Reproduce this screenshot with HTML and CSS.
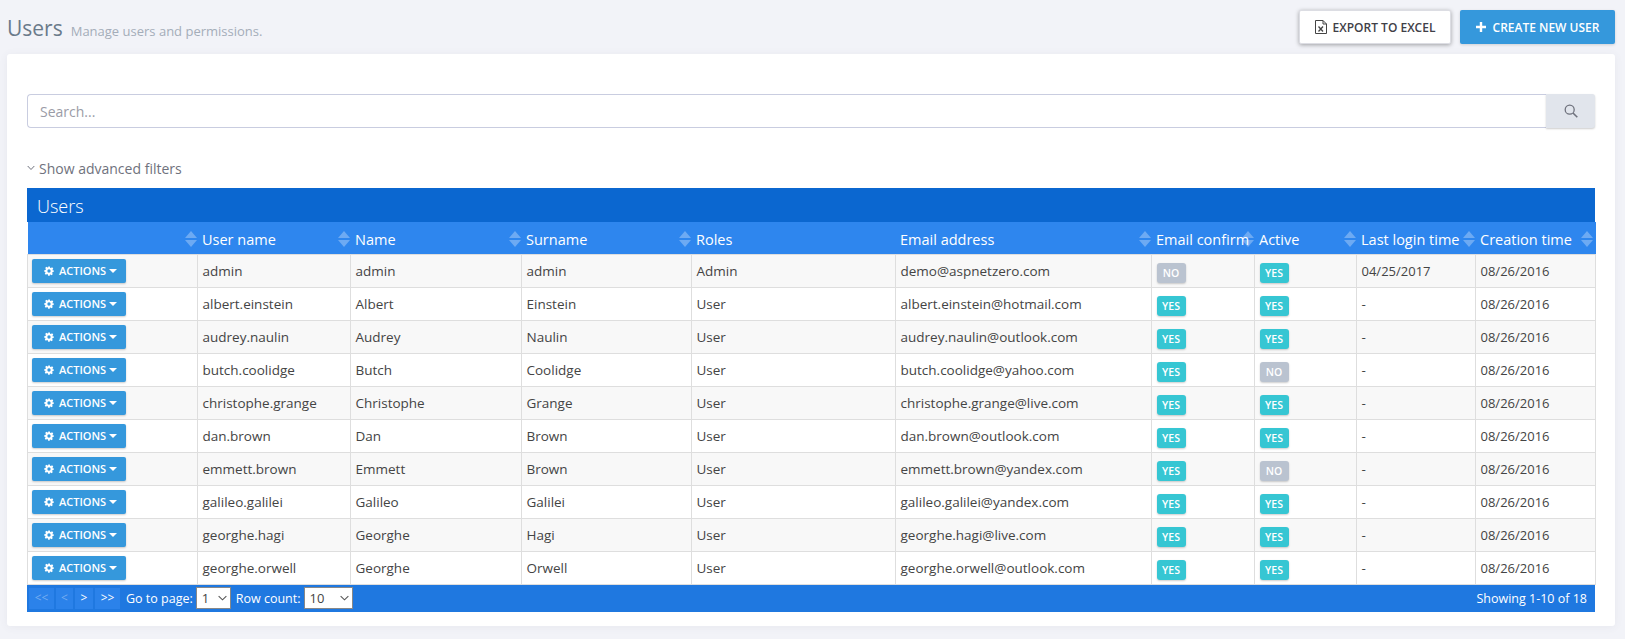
FILE: index.html
```html
<!DOCTYPE html>
<html lang="en">
<head>
<meta charset="utf-8">
<title>Users</title>
<link rel="stylesheet" href="styles.css">
</head>
<body>
<svg class="defs" width="0" height="0" aria-hidden="true">
  <defs>
    <symbol id="sort" viewBox="0 0 12 16"><path class="up" d="M6 0 12 7H0Z"/><path class="down" d="M0 9H12L6 16Z"/></symbol>
    <symbol id="cog" viewBox="0 0 24 24"><path fill-rule="evenodd" d="M10 1h4l.7 3.2 1.9.8 2.8-1.8 2.8 2.8-1.8 2.8.8 1.9L23.4 10v4l-3.2.7-.8 1.9 1.8 2.8-2.8 2.8-2.8-1.8-1.9.8L14 23.4h-4l-.7-3.2-1.9-.8-2.8 1.8-2.8-2.8 1.8-2.8-.8-1.9L.6 14v-4l3.2-.7.8-1.9L2.8 4.6l2.8-2.8 2.8 1.8 1.9-.8ZM12 8a4 4 0 1 0 0 8 4 4 0 0 0 0-8Z"/></symbol>
    <symbol id="chev" viewBox="0 0 10 6"><path d="M.7.8 5 5 9.300.8" fill="none" stroke="#555" stroke-width="1.200"/></symbol>
  </defs>
</svg>
<header class="page-head">
  <div class="page-title"><h1>Users</h1><span class="subtitle">Manage users and permissions.</span></div>
  <div class="head-actions">
    <button class="btn btn-white" type="button">
      <svg class="ico-excel" viewBox="0 0 12 14"><path d="M.5.5h7.5l3.5 3.5v9.500H.5Z M8 .5V4h3.500" fill="none" stroke="#444" stroke-width="1"/><path d="M3.500 6.500l4.500 5M8 6.500l-4.500 5" fill="none" stroke="#444" stroke-width="1.300"/></svg>
      EXPORT TO EXCEL</button>
    <button class="btn btn-blue" type="button">
      <svg class="ico-plus" viewBox="0 0 10 10"><path d="M3.800 0h2.400v3.800H10v2.400H6.200V10H3.800V6.200H0V3.800h3.800Z" fill="#fff"/></svg>
      CREATE NEW USER</button>
  </div>
</header>
<main class="panel">
  <div class="search">
    <input class="search-input" type="text" placeholder="Search...">
    <button class="search-btn" type="button" aria-label="Search">
      <svg viewBox="0 0 14 14" width="14" height="14"><circle cx="5.700" cy="5.700" r="4.500" fill="none" stroke="#6f727d" stroke-width="1.300"/><path d="M9 9l4.300 4.300" stroke="#6f727d" stroke-width="1.600"/></svg>
    </button>
  </div>
  <div class="adv">
    <svg viewBox="0 0 8 6" width="8" height="6"><path d="M.7 1 4 4.500 7.300 1" fill="none" stroke="#6f727d" stroke-width="1"/></svg>
    Show advanced filters
  </div>
  <section class="grid">
    <div class="grid-title">Users</div>
    <table>
      <colgroup>
        <col class="c0"><col class="c1"><col class="c2"><col class="c3"><col class="c4"><col class="c5"><col class="c6"><col class="c7"><col class="c8"><col class="c9">
      </colgroup>
      <thead>
        <tr>
          <th><svg class="sort"><use href="#sort"/></svg></th>
          <th>User name<svg class="sort sort-active"><use href="#sort"/></svg></th>
          <th>Name<svg class="sort"><use href="#sort"/></svg></th>
          <th>Surname<svg class="sort"><use href="#sort"/></svg></th>
          <th>Roles</th>
          <th>Email address<svg class="sort"><use href="#sort"/></svg></th>
          <th>Email confirm<svg class="sort"><use href="#sort"/></svg></th>
          <th>Active<svg class="sort"><use href="#sort"/></svg></th>
          <th>Last login time<svg class="sort"><use href="#sort"/></svg></th>
          <th>Creation time<svg class="sort"><use href="#sort"/></svg></th>
        </tr>
      </thead>
      <tbody>
        <tr><td><button class="act" type="button"><svg class="cog"><use href="#cog"/></svg>ACTIONS<i class="caret"></i></button></td><td>admin</td><td>admin</td><td>admin</td><td>Admin</td><td>demo@aspnetzero.com</td><td><span class="tag no">NO</span></td><td><span class="tag yes">YES</span></td><td class="date">04/25/2017</td><td class="date">08/26/2016</td></tr>
        <tr><td><button class="act" type="button"><svg class="cog"><use href="#cog"/></svg>ACTIONS<i class="caret"></i></button></td><td>albert.einstein</td><td>Albert</td><td>Einstein</td><td>User</td><td>albert.einstein@hotmail.com</td><td><span class="tag yes">YES</span></td><td><span class="tag yes">YES</span></td><td>-</td><td class="date">08/26/2016</td></tr>
        <tr><td><button class="act" type="button"><svg class="cog"><use href="#cog"/></svg>ACTIONS<i class="caret"></i></button></td><td>audrey.naulin</td><td>Audrey</td><td>Naulin</td><td>User</td><td>audrey.naulin@outlook.com</td><td><span class="tag yes">YES</span></td><td><span class="tag yes">YES</span></td><td>-</td><td class="date">08/26/2016</td></tr>
        <tr><td><button class="act" type="button"><svg class="cog"><use href="#cog"/></svg>ACTIONS<i class="caret"></i></button></td><td>butch.coolidge</td><td>Butch</td><td>Coolidge</td><td>User</td><td>butch.coolidge@yahoo.com</td><td><span class="tag yes">YES</span></td><td><span class="tag no">NO</span></td><td>-</td><td class="date">08/26/2016</td></tr>
        <tr><td><button class="act" type="button"><svg class="cog"><use href="#cog"/></svg>ACTIONS<i class="caret"></i></button></td><td>christophe.grange</td><td>Christophe</td><td>Grange</td><td>User</td><td>christophe.grange@live.com</td><td><span class="tag yes">YES</span></td><td><span class="tag yes">YES</span></td><td>-</td><td class="date">08/26/2016</td></tr>
        <tr><td><button class="act" type="button"><svg class="cog"><use href="#cog"/></svg>ACTIONS<i class="caret"></i></button></td><td>dan.brown</td><td>Dan</td><td>Brown</td><td>User</td><td>dan.brown@outlook.com</td><td><span class="tag yes">YES</span></td><td><span class="tag yes">YES</span></td><td>-</td><td class="date">08/26/2016</td></tr>
        <tr><td><button class="act" type="button"><svg class="cog"><use href="#cog"/></svg>ACTIONS<i class="caret"></i></button></td><td>emmett.brown</td><td>Emmett</td><td>Brown</td><td>User</td><td>emmett.brown@yandex.com</td><td><span class="tag yes">YES</span></td><td><span class="tag no">NO</span></td><td>-</td><td class="date">08/26/2016</td></tr>
        <tr><td><button class="act" type="button"><svg class="cog"><use href="#cog"/></svg>ACTIONS<i class="caret"></i></button></td><td>galileo.galilei</td><td>Galileo</td><td>Galilei</td><td>User</td><td>galileo.galilei@yandex.com</td><td><span class="tag yes">YES</span></td><td><span class="tag yes">YES</span></td><td>-</td><td class="date">08/26/2016</td></tr>
        <tr><td><button class="act" type="button"><svg class="cog"><use href="#cog"/></svg>ACTIONS<i class="caret"></i></button></td><td>georghe.hagi</td><td>Georghe</td><td>Hagi</td><td>User</td><td>georghe.hagi@live.com</td><td><span class="tag yes">YES</span></td><td><span class="tag yes">YES</span></td><td>-</td><td class="date">08/26/2016</td></tr>
        <tr><td><button class="act" type="button"><svg class="cog"><use href="#cog"/></svg>ACTIONS<i class="caret"></i></button></td><td>georghe.orwell</td><td>Georghe</td><td>Orwell</td><td>User</td><td>georghe.orwell@outlook.com</td><td><span class="tag yes">YES</span></td><td><span class="tag yes">YES</span></td><td>-</td><td class="date">08/26/2016</td></tr>
      </tbody>
    </table>
    <footer class="grid-foot">
      <div class="pager">
        <span class="pg dim w-l">&lt;&lt;</span><span class="pg dim w-s1">&lt;</span><span class="pg w-s">&gt;</span><span class="pg w-l">&gt;&gt;</span>
        <label class="pg-label">Go to page:</label>
        <span class="sel-wrap"><select class="sel sel-page"><option>1</option></select><svg class="chev"><use href="#chev"/></svg></span>
        <label class="pg-label pg-label-2">Row count:</label>
        <span class="sel-wrap"><select class="sel sel-rows"><option>10</option></select><svg class="chev"><use href="#chev"/></svg></span>
      </div>
      <div class="showing">Showing 1-10 of 18</div>
    </footer>
  </section>
</main>
</body>
</html>
```

FILE: styles.css
```css
* { box-sizing: border-box; }
html, body { margin: 0; height: 100%; }
body {
  background: #f2f3f8;
  font-family: "Open Sans", "Liberation Sans", sans-serif;
  font-size: 14px;
  color: #575962;
  overflow: hidden;
}
.defs { display: block; height: 0; }
.page-head {
  height: 54px;
  display: flex;
  justify-content: space-between;
  align-items: flex-start;
  padding: 10px 10px 0 7px;
}
.page-title { display: flex; align-items: baseline; padding-top: 5px; }
h1 {
  margin: 0;
  font-size: 21px;
  line-height: 26px;
  font-weight: 400;
  color: #6a7a8a;
}
.subtitle { margin-left: 8px; font-size: 13px; color: #a4adb9; }
.head-actions { display: flex; gap: 9px; }
.btn {
  height: 34px;
  border: 0;
  border-radius: 2px;
  font: 600 12px "Open Sans", sans-serif;
  display: flex;
  align-items: center;
  padding: 0;
}
.btn-white {
  width: 152px;
  justify-content: center;
  gap: 6px;
  background: #fff;
  color: #3f4047;
  border: 1px solid #dcdde3;
  box-shadow: 0 1px 4px rgba(0,0,0,.35);
}
.btn-blue {
  width: 155px;
  justify-content: center;
  gap: 7px;
  background: #3598dc;
  color: #fff;
  box-shadow: 0 1px 3px rgba(0,0,0,.15);
}
.ico-excel { width: 12px; height: 14px; }
.ico-plus { width: 10px; height: 10px; }
.panel {
  margin: 0 10px 0 7px;
  height: 572px;
  background: #fff;
  border-radius: 3px;
  box-shadow: 0 1px 8px rgba(80,80,120,.07);
  padding: 40px 20px 0;
}
.search { display: flex; height: 34px; }
.search-input {
  flex: 1;
  height: 34px;
  border: 1px solid #c9cde0;
  border-right: 0;
  border-radius: 4px 0 0 4px;
  padding: 0 12px;
  font: 14px "Open Sans", sans-serif;
  outline: 0;
  background: #fff;
}
.search-input::placeholder { color: #9b9ca6; opacity: 1; }
.search-btn {
  width: 49px;
  height: 34px;
  border: 0;
  border-radius: 0 3px 3px 0;
  background: #e1e5ec;
  box-shadow: 0 1px 2px rgba(0,0,0,.2);
  display: flex;
  align-items: center;
  justify-content: center;
  padding: 0;
}
.adv {
  margin-top: 28px;
  height: 22px;
  padding-top: 2px;
  display: flex;
  align-items: center;
  gap: 4px;
  color: #6f727d;
}
.grid { margin-top: 10px; }
.grid-title {
  height: 34px;
  line-height: 34px;
  padding: 1px 0 0 10px;
  background: #0b67d0;
  color: #fff;
  font-size: 18px;
  font-weight: 300;
}
table {
  width: 100%;
  table-layout: fixed;
  border-collapse: collapse;
}
.c0 { width: 170px; } .c1 { width: 153px; } .c2 { width: 171px; } .c3 { width: 170px; } .c4 { width: 204px; }
.c5 { width: 256px; } .c6 { width: 103px; } .c7 { width: 102px; } .c8 { width: 119px; } .c9 { width: 120px; }
thead tr { height: 32px; background: #2e86ee; }
th {
  position: relative;
  padding: 3px 0 0 4.500px;
  color: #fff;
  font-size: 14.500px;
  font-weight: 400;
  text-align: left;
  white-space: nowrap;
}
.sort {
  position: absolute;
  right: 1px;
  top: 9px;
  width: 12px;
  height: 16px;
  fill: rgba(255,255,255,.3);
}
th:last-child .sort { right: 3px; }
.sort-active .down { fill: #fff; }
tbody tr { height: 33px; }
tbody tr:nth-child(odd) { background: #f8f8f8; }
td {
  padding: 1px 0 0 4.500px;
  border: 1px solid #dedede;
  color: #444;
  font-size: 13.500px;
  white-space: nowrap;
  overflow: hidden;
}
td:first-child { padding: 0 0 0 4px; }
.date { font-size: 13px; }
.act {
  height: 24px;
  width: 94px;
  border: 0;
  border-radius: 2px;
  background: #3598dc;
  color: #fff;
  font: 600 11px "Open Sans", sans-serif;
  display: flex;
  align-items: center;
  justify-content: center;
  padding: 0 0 0 3px;
  box-shadow: 0 1px 2px rgba(0,0,0,.2);
}
.cog { width: 10px; height: 10px; fill: #fff; margin-right: 5px; }
.caret {
  margin-left: 3px;
  border-top: 4px solid #fff;
  border-left: 4px solid transparent;
  border-right: 4px solid transparent;
}
.tag {
  display: block;
  width: 29px;
  height: 20px;
  margin-top: 4px;
  line-height: 20px;
  text-align: center;
  border-radius: 3px;
  color: #fff;
  font-size: 10.500px;
  font-weight: 600;
  box-shadow: 0 1px 2px rgba(0,0,0,.2);
}
.yes { background: #36c6d3; }
.no { background: #bac3d0; }
.grid-foot {
  height: 27px;
  background: #1f78e0;
  display: flex;
  justify-content: space-between;
  align-items: center;
  padding: 0 8px 0 2px;
  color: #fff;
  font-size: 12.500px;
}
.pager { display: flex; align-items: center; }
.pg {
  height: 21px;
  line-height: 20px;
  text-align: center;
  background: #2b82ea;
  margin-right: 2px;
  font-size: 12px;
}
.w-l { width: 25px; }
.w-s { width: 18px; }
.w-s1 { width: 17px; }
.dim { color: rgba(255,255,255,.35); }
.pg-label { margin: 0 3px 0 4px; }
.pg-label-2 { margin-left: 5px; }
.sel-wrap { position: relative; display: flex; }
.sel {
  appearance: none;
  height: 22px;
  border: 1px solid #888;
  background: #fff;
  color: #444;
  font: 13px "Open Sans", sans-serif;
  padding: 0 0 0 5px;
  border-radius: 0;
}
.sel-page { width: 35px; }
.sel-rows { width: 49px; }
.chev {
  position: absolute;
  right: 4px;
  top: 8px;
  width: 9px;
  height: 6px;
  pointer-events: none;
}
```
